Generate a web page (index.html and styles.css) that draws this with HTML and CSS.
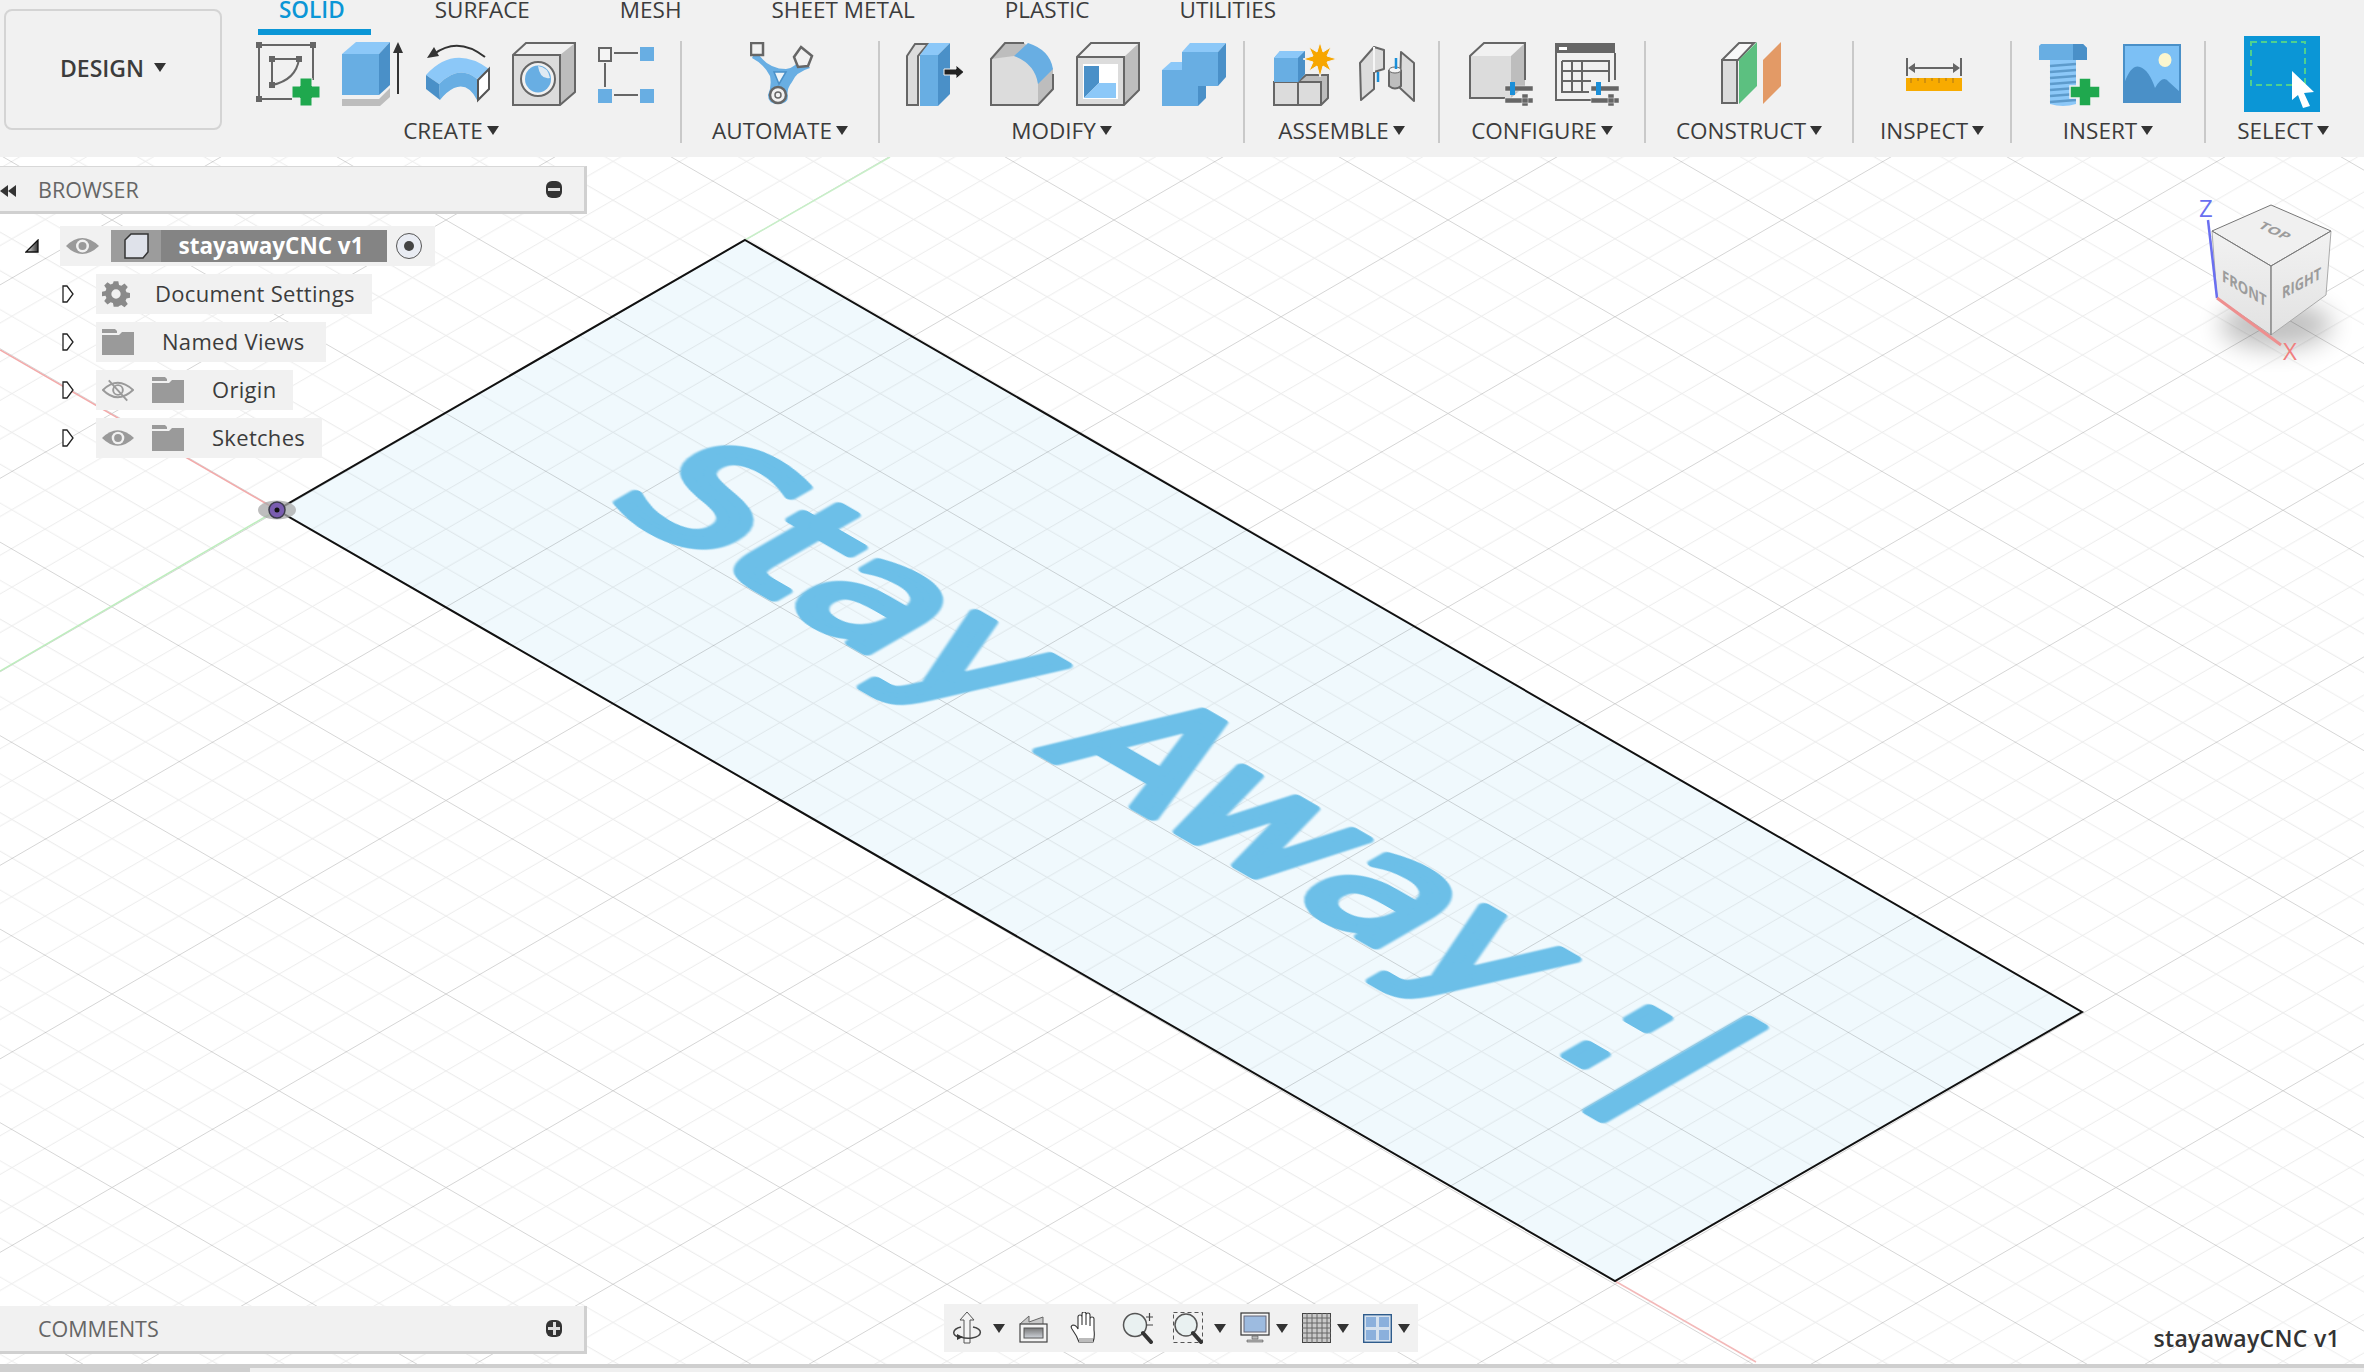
FILE: index.html
```html
<!DOCTYPE html>
<html lang="en">
  <head>
    <meta charset="UTF-8" />
    <meta name="viewport" content="width=device-width, initial-scale=1.0" />
    <title>stayawayCNC v1</title>
    <link rel="stylesheet" href="styles.css">
  </head>
  <body>
    <div class="app">
      <header class="toolbar">
        <div class="design-btn">DESIGN <i class="drop"></i></div>
        <div class="toolbar-main">
          <nav class="tabs">
            <span class="tab active">SOLID</span>
            <span class="tab">SURFACE</span>
            <span class="tab">MESH</span>
            <span class="tab">SHEET METAL</span>
            <span class="tab">PLASTIC</span>
            <span class="tab">UTILITIES</span>
          </nav>
          <div class="ribbon">
            <div class="group g-create">
              <div class="icons">
                <svg width="64" height="64" viewBox="0 0 64 64">
                  <path d="M3 3H57V38M3 3V57H36M16 17H43M16 17V43M43 17Q40 38 16 43" fill="none" stroke="#666" stroke-width="2"/>
                  <path d="M0 0h6v6H0zM54 0h6v6h-6zM0 54h6v6H0zM13 14h6v6h-6zM40 14h6v6h-6zM13 40h6v6h-6z" fill="#666"/>
                  <path d="M44 36h12v8h8v12h-8v8H44v-8h-8V44h8z" fill="#1fa84e" stroke="#f1f1f1" stroke-width="1"/>
                </svg>
                <svg width="62" height="64" viewBox="0 0 62 64">
                  <path d="M0 12L14 0H48L37 12z" fill="#8cc8f8"/>
                  <path d="M0 12H37V53H0z" fill="#68aee3"/>
                  <path d="M37 12L48 0V43L37 53z" fill="#4a90c8"/>
                  <path d="M0 57H37L48 46V55L38 64H0z" fill="#bdbdbd"/>
                  <path d="M56 52V8" stroke="#333" stroke-width="2"/>
                  <path d="M56 0l5 11H51z" fill="#333"/>
                </svg>
                <svg width="64" height="64" viewBox="0 0 64 64">
                  <path d="M0 33Q28 2 63 27L51 37Q33 22 13 42z" fill="#8cc8f8"/>
                  <path d="M13 42Q33 22 51 37V58Q42 40 28 46Q20 50 14 58z" fill="#68aee3"/>
                  <path d="M0 33L13 42L14 58L0 47z" fill="#4a90c8"/>
                  <path d="M52 38L63 27V47L52 58z" fill="#fff" stroke="#555" stroke-width="2"/>
                  <path d="M59 15Q32 -6 8 12" fill="none" stroke="#333" stroke-width="2"/>
                  <path d="M1 16L8 5L13 14z" fill="#333"/>
                </svg>
                <svg width="64" height="64" viewBox="0 0 64 64">
                  <path d="M1 13L14 1H63L48 13z" fill="#f1f1f1"/>
                  <path d="M48 13L63 1V50L48 63z" fill="#bdbdbd"/>
                  <path d="M1 13H48V63H1z" fill="#dcdcdc"/>
                  <path d="M1 63V13L14 1H63V50L48 63zM1 13H48V63" fill="none" stroke="#666" stroke-width="2"/>
                  <ellipse cx="26" cy="37" rx="17" ry="17" fill="#f1f1f1" stroke="#666" stroke-width="2"/>
                  <ellipse cx="26" cy="37" rx="13" ry="13.5" fill="#68aee3"/>
                  <path d="M26 24Q36 25 38 36Q28 38 26 24z" fill="#dfeaf3"/>
                </svg>
                <svg width="56" height="64" viewBox="0 0 56 64">
                  <path d="M1 6h12v13H1z" fill="#f4f4f4" stroke="#666" stroke-width="2"/>
                  <path d="M42 5h14v14H42zM0 47h14v14H0zM42 47h14v14H42z" fill="#68aee3"/>
                  <path d="M16 11H40M7 21V45M16 53H40" stroke="#666" stroke-width="2"/>
                </svg>
              </div>
              <div class="group-label">CREATE<i class="drop"></i></div>
            </div>
            <div class="group">
              <div class="icons">
                <svg width="64" height="64" viewBox="0 0 64 64">
                  <path d="M6 8Q16 27 36 27Q46 26 52 14L60 26Q46 30 42 40Q36 48 38 54Q38 62 28 62Q18 62 18 53Q22 44 20 34Q14 22 2 16z" fill="#68aee3"/>
                  <path d="M24 30H36L29 42z" fill="#eef4f8" stroke="#4a90c8" stroke-width="1.5"/>
                  <rect x="1" y="1" width="12" height="12" fill="#f1f1f1" stroke="#666" stroke-width="2.5"/>
                  <path d="M51 5L62 14L58 24L48 25L44 15z" fill="#f1f1f1" stroke="#666" stroke-width="2.5"/>
                  <circle cx="28" cy="53" r="8" fill="#f1f1f1" stroke="#666" stroke-width="2.5"/>
                  <circle cx="28" cy="53" r="3" fill="none" stroke="#666" stroke-width="1.5"/>
                </svg>
              </div>
              <div class="group-label">AUTOMATE<i class="drop"></i></div>
            </div>
            <div class="group g-modify">
              <div class="icons">
                <svg width="62" height="64" viewBox="0 0 62 64">
                  <path d="M1 63V14L9 2H22L12 14V63z" fill="#dcdcdc" stroke="#666" stroke-width="2"/>
                  <path d="M14 13L23 1H44L32 13z" fill="#8cc8f8"/>
                  <path d="M14 13H32V64H14z" fill="#68aee3"/>
                  <path d="M32 13L44 1V52L32 64z" fill="#4a90c8"/>
                  <path d="M38 27H50V23L58 30L50 37V33H38z" fill="#222" stroke="#f4f4f4" stroke-width="1"/>
                </svg>
                <svg width="64" height="64" viewBox="0 0 64 64">
                  <path d="M34 1H15L1 17V63H48L63 47V27z" fill="#bdbdbd"/>
                  <path d="M1 17L24 14Q48 20 48 42V63H1z" fill="#dcdcdc"/>
                  <path d="M24 14L38 1Q60 8 63 27L48 42Q45 22 24 14z" fill="#68aee3"/>
                  <path d="M34 1H15L1 17V63H48L63 47V32" fill="none" stroke="#666" stroke-width="2"/>
                </svg>
                <svg width="64" height="64" viewBox="0 0 64 64">
                  <path d="M1 15L15 1H63L48 15z" fill="#f1f1f1"/>
                  <path d="M48 15L63 1V48L48 63z" fill="#bdbdbd"/>
                  <path d="M1 15H48V63H1z" fill="#dcdcdc"/>
                  <path d="M1 63V15L15 1H63V48L48 63zM1 15H48V63" fill="none" stroke="#666" stroke-width="2"/>
                  <path d="M7 22H42V57H7z" fill="#fff"/>
                  <path d="M8 24H23V41L8 56z" fill="#4a90c8"/>
                  <path d="M8 56L23 41H40V56z" fill="#8cc8f8"/>
                </svg>
                <svg width="64" height="64" viewBox="0 0 64 64">
                  <path d="M20 10L28 1H64L56 10z" fill="#8cc8f8"/>
                  <path d="M56 10L64 1V35L56 44z" fill="#4a90c8"/>
                  <path d="M20 10H56V44H20z" fill="#68aee3"/>
                  <path d="M36 44H44V56L36 64z" fill="#4a90c8"/>
                  <path d="M0 28L9 20H20V28z" fill="#8cc8f8"/>
                  <path d="M0 28H20V44H36V64H0z" fill="#68aee3"/>
                </svg>
              </div>
              <div class="group-label">MODIFY<i class="drop"></i></div>
            </div>
            <div class="group">
              <div class="icons">
                <svg width="64" height="64" viewBox="0 0 64 64">
                  <path d="M25 40L33 33H55V56L48 63H25z" fill="#bdbdbd"/>
                  <path d="M25 40H48V63H25zM1 40H25V63H1z" fill="#dcdcdc"/>
                  <path d="M25 40L33 33H55V56L48 63H1V40H48V63M25 40V63" fill="none" stroke="#666" stroke-width="2"/>
                  <path d="M1 40V16L7 9H32V32L25 40z" fill="#68aee3"/>
                  <path d="M1 16L7 9H32L25 16z" fill="#8cc8f8"/>
                  <path d="M25 16L32 9V32L25 40z" fill="#4a90c8"/>
                  <path d="M47 0L50 10L58 5L54 14L64 17L54 20L58 29L50 24L47 35L44 24L36 29L40 20L30 17L40 14L36 5L44 10z" fill="#f7a600" stroke="#f1f1f1" stroke-width="1"/>
                </svg>
                <svg width="56" height="64" viewBox="0 0 56 64">
                  <path d="M1 21L15 5L25 8V27L15 30V47L2 58z" fill="#dcdcdc" stroke="#666" stroke-width="2" stroke-linejoin="round"/>
                  <path d="M15 5V30" stroke="#f6f6f6" stroke-width="2"/>
                  <path d="M42 10L55 21V59L41 46z" fill="#dcdcdc" stroke="#666" stroke-width="2" stroke-linejoin="round"/>
                  <path d="M30 29V44Q36 49 42 44V29z" fill="#bdbdbd" stroke="#666" stroke-width="2"/>
                  <ellipse cx="36" cy="28" rx="6" ry="3" fill="#f4f4f4" stroke="#666"/>
                  <path d="M19 30V40M37 16V27" stroke="#1b8fd8" stroke-width="2.5"/>
                </svg>
              </div>
              <div class="group-label">ASSEMBLE<i class="drop"></i></div>
            </div>
            <div class="group">
              <div class="icons">
                <svg width="64" height="64" viewBox="0 0 64 64">
                  <path d="M1 14L15 1H56L42 14z" fill="#f1f1f1"/>
                  <path d="M42 14L56 1V44L42 56z" fill="#bdbdbd"/>
                  <path d="M1 14H42V56H1z" fill="#dcdcdc"/>
                  <path d="M36 56H1V14L15 1H56V38" fill="none" stroke="#666" stroke-width="2"/>
                  <path d="M36 44h28v5H36zM36 56h28v5H36zM53 52h6v12h-6z" fill="#666" stroke="#f1f1f1" stroke-width=".5"/>
                  <path d="M41 40h5v13h-5z" fill="#1b8fd8"/>
                </svg>
                <svg width="64" height="64" viewBox="0 0 64 64">
                  <path d="M0 1H60V11H0z" fill="#666"/>
                  <path d="M4 5h8v3H4z" fill="#fff"/>
                  <path d="M1 11V58H38M60 11V38M7 19H54V40M7 19V50H34M7 29H54M7 39H36M17 19V50M27 19V50" fill="none" stroke="#666" stroke-width="2"/>
                  <path d="M36 44h28v5H36zM36 56h28v5H36zM53 52h6v12h-6z" fill="#666" stroke="#f1f1f1" stroke-width=".5"/>
                  <path d="M41 40h5v13h-5z" fill="#1b8fd8"/>
                </svg>
              </div>
              <div class="group-label">CONFIGURE<i class="drop"></i></div>
            </div>
            <div class="group">
              <div class="icons">
                <svg width="60" height="64" viewBox="0 0 60 64">
                  <path d="M1 18L18 1H33L17 18z" fill="#f8f8f8" stroke="#666" stroke-width="2"/>
                  <path d="M1 18H16V61H1z" fill="#dcdcdc" stroke="#666" stroke-width="2"/>
                  <path d="M18 18L36 0V44L18 62z" fill="#5cc080"/>
                  <path d="M42 18L60 0V44L42 62z" fill="#e39a66"/>
                </svg>
              </div>
              <div class="group-label">CONSTRUCT<i class="drop"></i></div>
            </div>
            <div class="group">
              <div class="icons">
                <svg width="56" height="33" viewBox="0 0 56 33">
                  <path d="M1 0V18M55 0V18M5 10H51" stroke="#666" stroke-width="2"/>
                  <path d="M2 10l7-5v10zM54 10l-7-5v10z" fill="#666"/>
                  <path d="M0 20H56V33H0z" fill="#f8ab00"/>
                  <path d="M5 20v5M12 20v3M19 20v5M26 20v3M33 20v5M40 20v3M47 20v5" stroke="#a9761a" stroke-width="1"/>
                </svg>
              </div>
              <div class="group-label">INSPECT<i class="drop"></i></div>
            </div>
            <div class="group">
              <div class="icons">
                <svg width="62" height="64" viewBox="0 0 62 64">
                  <path d="M11 18H37V62Q24 66 11 62z" fill="#8cc8f8"/>
                  <path d="M11 24L37 22M11 30L37 28M11 36L37 34M11 42L37 40M11 48L37 46M11 54L37 52M11 60L37 58" stroke="#5d9bcc" stroke-width="2.5"/>
                  <path d="M2 2H44L48 6V18H0V4z" fill="#68aee3"/>
                  <path d="M34 2H44L48 6V18H34z" fill="#4a90c8"/>
                  <path d="M40 36h12v8h9v12h-9v8H40v-8h-9V44h9z" fill="#1fa84e" stroke="#f1f1f1" stroke-width="1.5"/>
                </svg>
                <svg width="58" height="64" viewBox="0 0 58 64">
                  <path d="M1 3H57V60H1z" fill="#7cc0f5" stroke="#4a90c8" stroke-width="2"/>
                  <path d="M1 42Q8 22 17 25Q26 28 32 46Q40 32 46 40L57 50V60H1z" fill="#4a90c8"/>
                  <ellipse cx="42" cy="18" rx="6.5" ry="7" fill="#fbf6cf"/>
                </svg>
              </div>
              <div class="group-label">INSERT<i class="drop"></i></div>
            </div>
            <div class="group last">
              <div class="icons">
                <svg width="76" height="76" viewBox="0 0 76 76">
                  <path d="M0 0H76V76H0z" fill="#0b96d6"/>
                  <path d="M7 6H61V49H7z" fill="none" stroke="#4fd08f" stroke-width="2" stroke-dasharray="6 4"/>
                  <path d="M48 35L70 56L60 57L66 70L59 72L54 59L48 64z" fill="#fff"/>
                </svg>
              </div>
              <div class="group-label">SELECT<i class="drop"></i></div>
            </div>
          </div>
        </div>
      </header>

      <main class="viewport">
        <svg class="scene" width="2364" height="1207" viewBox="0 157 2364 1207">
          <defs>
            <pattern id="grid" patternUnits="userSpaceOnUse" width="100" height="100" patternTransform="matrix(1.67 0.9675 -1.67 0.9675 780 413)">
              <path d="M0 20H100M0 40H100M0 60H100M0 80H100M20 0V100M40 0V100M60 0V100M80 0V100" stroke="#000" stroke-opacity=".07" stroke-width=".55" fill="none"/>
              <path d="M0 0H100M0 0V100" stroke="#000" stroke-opacity=".21" stroke-width=".8" fill="none"/>
            </pattern>
            <linearGradient id="faceLeft" x1="0" y1="0" x2="0" y2="1">
              <stop offset="0" stop-color="#f2f2f2"/>
              <stop offset="1" stop-color="#e2e2e2"/>
            </linearGradient>
            <filter id="soft" x="-50%" y="-80%" width="200%" height="260%"><feGaussianBlur stdDeviation="12"/></filter>
            <filter id="fuzz"><feGaussianBlur stdDeviation="0.8"/></filter>
          </defs>
          <rect x="0" y="157" width="2364" height="1207" fill="#fff"/>
          <path d="M745 240L2082 1012L1615 1281L277 510z" fill="#f0f9fd"/>
          <rect x="0" y="157" width="2364" height="1207" fill="url(#grid)"/>
          <path d="M0 350L277 510" stroke="#f3a9a9" stroke-width="1.5"/>
          <path d="M1615 1281L1756 1362" stroke="#f3b9b9" stroke-width="1.5"/>
          <path d="M277 510L0 671" stroke="#bdeebd" stroke-width="1.5"/>
          <path d="M745 240L890 157" stroke="#c8efc8" stroke-width="1.5"/>
          <text class="plate-text" filter="url(#fuzz)" transform="matrix(.866 .5 -.81 .468 603 499)">Stay Away :|</text>
          <path d="M745 240L2082 1012L1615 1281L277 510z" fill="none" stroke="#111" stroke-width="2"/>
          <ellipse cx="277" cy="510" rx="19" ry="9.5" fill="#a8a8a8" opacity=".75"/>
          <circle cx="277" cy="510" r="8" fill="#7a5db0" stroke="#3b3b4a" stroke-width="1.5"/>
          <circle cx="277" cy="510" r="2.5" fill="#111"/>

          <ellipse cx="2276" cy="325" rx="56" ry="24" fill="#000" opacity=".24" filter="url(#soft)"/>
          <path d="M2212 231L2271 205L2331 231L2271 266z" fill="#f0f0f0" stroke="#777"/>
          <path d="M2212 231L2271 266V335L2217 298z" fill="url(#faceLeft)" stroke="#aaa"/>
          <path d="M2271 266L2331 231L2326 295L2271 335z" fill="url(#faceLeft)" stroke="#aaa"/>
          <path d="M2212 231L2271 266L2331 231M2271 266V335" fill="none" stroke="#777"/>
          <text class="cube-text" transform="matrix(.9 .42 -.6 .5 2257 227)">TOP</text>
          <text class="cube-text" transform="matrix(.82 .48 0 1 2222 281)">FRONT</text>
          <text class="cube-text" transform="matrix(.8 -.42 0 1 2282 299)">RIGHT</text>
          <path d="M2217 298L2208 220" stroke="#6a6ff0" stroke-width="2.5"/>
          <path d="M2217 298L2281 345" stroke="#ee8f8f" stroke-width="3"/>
          <text class="axis-z" x="2199" y="217">Z</text>
          <text class="axis-x" x="2283" y="360">X</text>
        </svg>

        <section class="panel browser">
          <i class="rewind"><b></b><b></b></i>
          <span class="panel-title">BROWSER</span>
          <i class="panel-btn minus"></i>
        </section>

        <ul class="tree">
          <li class="tree-row root">
            <svg class="twist" width="14" height="14" viewBox="0 0 14 14"><defs><linearGradient id="tw"><stop offset="0" stop-color="#eee"/><stop offset="1" stop-color="#333"/></linearGradient></defs><path d="M13 1V13H1z" fill="url(#tw)" stroke="#111" stroke-width="1.3"/></svg>
            <div class="row-body">
              <svg class="eye" width="33" height="22" viewBox="0 0 33 22"><use href="#eyeIcon"/></svg>
              <span class="root-name">
                <span class="root-cube"><svg width="26" height="26" viewBox="0 0 26 26"><path d="M2 7L8 1H25V19L20 25H2z" fill="#dfe2ea" stroke="#333" stroke-width="1.5"/></svg></span>
                <span class="root-text">stayawayCNC v1</span>
              </span>
              <span class="radio"><i></i></span>
            </div>
          </li>
          <li class="tree-row">
            <svg class="twist" width="12" height="18" viewBox="0 0 12 18"><path d="M1 1H5L11 9L5 17H1z" fill="#fff" stroke="#222" stroke-width="1.3"/></svg>
            <div class="row-body">
              <svg width="28" height="28" viewBox="0 0 24 24"><path fill="#8a8a8a" d="M10 1h4l.6 3.2 2 .8 2.7-1.9 2.8 2.8-1.900 2.700.8 2 3 .6v4l-3 .6-.8 2 1.900 2.700-2.800 2.800-2.700-1.900-2 .8L14 23h-4l-.6-3.200-2-.8-2.700 1.900-2.800-2.800 1.900-2.700-.8-2L0 14v-4l3-.6.8-2L1.900 4.700 4.700 1.900 7.400 3.800l2-.8zM12 8a4 4 0 1 0 0 8 4 4 0 0 0 0-8z"/></svg>
              <span class="row-text t-doc">Document Settings</span>
            </div>
          </li>
          <li class="tree-row">
            <svg class="twist" width="12" height="18" viewBox="0 0 12 18"><path d="M1 1H5L11 9L5 17H1z" fill="#fff" stroke="#222" stroke-width="1.3"/></svg>
            <div class="row-body">
              <svg class="folder" width="32" height="26" viewBox="0 0 32 26"><use href="#folderIcon"/></svg>
              <span class="row-text t-views">Named Views</span>
            </div>
          </li>
          <li class="tree-row">
            <svg class="twist" width="12" height="18" viewBox="0 0 12 18"><path d="M1 1H5L11 9L5 17H1z" fill="#fff" stroke="#222" stroke-width="1.3"/></svg>
            <div class="row-body">
              <svg class="eye" width="32" height="24" viewBox="0 0 33 24"><path d="M1 12Q16 -3 32 12Q16 27 1 12z" fill="none" stroke="#9a9a9a" stroke-width="2"/><circle cx="16.500" cy="12" r="5" fill="none" stroke="#9a9a9a" stroke-width="2"/><path d="M7 2L26 23" stroke="#9a9a9a" stroke-width="2"/></svg>
              <svg class="folder" width="32" height="26" viewBox="0 0 32 26"><use href="#folderIcon"/></svg>
              <span class="row-text t-sub">Origin</span>
            </div>
          </li>
          <li class="tree-row">
            <svg class="twist" width="12" height="18" viewBox="0 0 12 18"><path d="M1 1H5L11 9L5 17H1z" fill="#fff" stroke="#222" stroke-width="1.3"/></svg>
            <div class="row-body">
              <svg class="eye" width="32" height="22" viewBox="0 0 33 22"><use href="#eyeIcon"/></svg>
              <svg class="folder" width="32" height="26" viewBox="0 0 32 26"><use href="#folderIcon"/></svg>
              <span class="row-text t-sub">Sketches</span>
            </div>
          </li>
        </ul>

        <section class="panel comments">
          <span class="panel-title">COMMENTS</span>
          <i class="panel-btn plus"></i>
        </section>

        <div class="navbar">
          <div class="nav-item loose">
            <svg width="30" height="34" viewBox="0 0 30 34"><path d="M15 1L22 9H18V32H12V9H8z" fill="#f4f4f4" stroke="#555"/><path d="M9 16C0 18 -1 25 8 26M21 16C31 18 31 25 20 27Q14 28 9 26" fill="none" stroke="#444" stroke-width="1.500"/><path d="M5 23l6 3-6 3z" fill="#333"/></svg>
            <i class="drop"></i>
          </div>
          <svg width="29" height="30" viewBox="0 0 29 30"><path d="M1 11L10 3V9L24 4V11" fill="#c9c9c9" stroke="#666"/><rect x="1" y="11" width="27" height="18" fill="#f4f4f4" stroke="#444" stroke-width="1.200"/><defs><linearGradient id="lk" x1="0" y1="0" x2="0" y2="1"><stop offset="0" stop-color="#777"/><stop offset="1" stop-color="#cfd3da"/></linearGradient></defs><rect x="5" y="15" width="19" height="10" fill="url(#lk)" stroke="#555"/></svg>
          <svg class="spaced" width="30" height="32" viewBox="0 0 30 32"><path d="M9 30Q7 24 2 17Q0 14 3 13Q6 13 8 17V5Q8 3 10 3T12 5V13V2Q12 0 14 0T16 2V13V3Q16 1 18 1T20 3V14V7Q20 5 22 5T24 7V18Q25 25 23 30z" fill="#fff" stroke="#333" stroke-width="1.100"/><path d="M9 26H23V30H9z" fill="#bbb"/></svg>
          <svg class="spaced" width="31" height="32" viewBox="0 0 31 32"><circle cx="13" cy="13" r="11.500" fill="#e9f1f1" stroke="#555" stroke-width="1.500"/><path d="M21 21L29 30" stroke="#333" stroke-width="4" stroke-linecap="round"/><path d="M24 5H31M27.500 1V9M24 13H31" stroke="#444" stroke-width="1.200"/></svg>
          <div class="nav-item loose spaced-sm">
            <svg width="30" height="32" viewBox="0 0 30 32"><rect x=".5" y=".5" width="29" height="30" fill="none" stroke="#555" stroke-dasharray="4 3"/><circle cx="13" cy="13" r="11" fill="#e9f1f1" stroke="#555" stroke-width="1.500"/><path d="M20 21L28 30" stroke="#333" stroke-width="4" stroke-linecap="round"/></svg>
            <i class="drop"></i>
          </div>
          <div class="nav-item">
            <svg width="30" height="32" viewBox="0 0 30 32"><rect x="1" y="1" width="28" height="22" fill="#f4f4f4" stroke="#333" stroke-width="1.200"/><rect x="4" y="4" width="22" height="16" fill="#9dbbe0" stroke="#667"/><path d="M12 24H18V27H12zM7 28H23V30H7z" fill="#bbb" stroke="#555" stroke-width=".6"/></svg>
            <i class="drop"></i>
          </div>
          <div class="nav-item">
            <svg width="29" height="30" viewBox="0 0 29 30"><rect x=".5" y=".5" width="28" height="29" fill="#c9c9c9" stroke="#444"/><path d="M5 0V30M10 0V30M15 0V30M20 0V30M25 0V30M0 5H29M0 10H29M0 15H29M0 20H29M0 25H29" stroke="#666" stroke-width="1"/></svg>
            <i class="drop"></i>
          </div>
          <div class="nav-item">
            <svg width="29" height="29" viewBox="0 0 29 29"><rect x=".7" y=".7" width="27.600" height="27.600" fill="#d5e1ee" stroke="#2f5c8c" stroke-width="1.400"/><path d="M3 3H13V13H3zM16 3H26V13H16zM3 16H13V26H3zM16 16H26V26H16z" fill="#8bb0dc"/></svg>
            <i class="drop"></i>
          </div>
        </div>

        <div class="doc-name">stayawayCNC v1</div>
      </main>

      <footer class="statusbar"><span class="status-left"></span></footer>
    </div>

    <svg class="sprites" width="0" height="0">
      <symbol id="eyeIcon" viewBox="0 0 33 22"><path d="M0 11Q16 -5 33 11Q16 27 0 11z" fill="#9a9a9a"/><circle cx="16.500" cy="11" r="6.500" fill="#f1f1f1"/><circle cx="16.500" cy="11" r="4" fill="#9a9a9a"/></symbol>
      <symbol id="folderIcon" viewBox="0 0 32 26"><path d="M0 0H13L15 2V4H0zM0 6H17L20 3H32V26H0z" fill="#9a9a9a"/></symbol>
    </svg>
  </body>
</html>
```

FILE: styles.css
```css
* {
  box-sizing: border-box;
}

body {
  margin: 0;
  font-family: "Open Sans", Arial, sans-serif;
  color: #3c3c3c;
  background: #fff;
  overflow: hidden;
}

.app {
  display: flex;
  flex-direction: column;
  width: 2364px;
  height: 1372px;
}

.sprites {
  position: absolute;
}

/* top toolbar */
.toolbar {
  display: flex;
  flex: none;
  height: 157px;
  background: #f1f1f1;
}

.design-btn {
  display: flex;
  align-items: center;
  justify-content: center;
  gap: 10px;
  flex: none;
  width: 218px;
  height: 121px;
  margin: 9px 12px 0 4px;
  padding-bottom: 4px;
  border: 2px solid #d4d4d4;
  border-radius: 8px;
  font-size: 23px;
  font-weight: 600;
}

.drop {
  display: inline-block;
  width: 0;
  height: 0;
  border-left: 6px solid transparent;
  border-right: 6px solid transparent;
  border-top: 9px solid #333;
}

.toolbar-main {
  flex: 1;
  min-width: 0;
}

.tabs {
  display: flex;
  height: 36px;
}

.tab {
  position: relative;
  padding: 0 45px;
  font-size: 22.5px;
  line-height: 20px;
}

.tab.active {
  color: #0b96d6;
  font-weight: 600;
}

.tab.active::after {
  content: "";
  position: absolute;
  left: 24px;
  right: 19px;
  top: 29px;
  height: 6px;
  background: #0b96d6;
}

.ribbon {
  display: grid;
  grid-template-columns: 448px 198px 365px 195px 206px 208px 158px 194px 158px;
  margin-top: 5px;
}

.group {
  height: 102px;
  padding: 1px 0 0 4px;
  border-right: 2px solid #c9c9c9;
}

.g-modify .icons {
  padding-left: 4px;
}

.group.last {
  padding-left: 0;
  border-right: 0;
}

.last .icons {
  padding-right: 6px;
}

.icons {
  display: flex;
  align-items: center;
  justify-content: center;
  gap: 22px;
  height: 64px;
}

.g-create .icons {
  padding-right: 8px;
}

.g-create .group-label {
  padding-right: 12px;
}

.group-label {
  display: flex;
  align-items: center;
  justify-content: center;
  gap: 4px;
  height: 24px;
  margin: 12px 0 0 -4px;
  font-size: 22.5px;
}

/* 3d view */
.viewport {
  position: relative;
  flex: 1;
  overflow: hidden;
}

.scene {
  position: absolute;
  left: 0;
  top: 0;
}

.plate-text {
  font-family: "DejaVu Sans", sans-serif;
  font-size: 197px;
  fill: #6cbfe8;
  stroke: #6cbfe8;
  stroke-width: 11px;
  stroke-linejoin: round;
}

.cube-text {
  font-family: "Open Sans", Arial, sans-serif;
  font-size: 16px;
  font-weight: 700;
  fill: #9c9c9c;
}

.axis-z,
.axis-x {
  font-family: "Open Sans", Arial, sans-serif;
  font-size: 24px;
}

.axis-z {
  fill: #6a6ff0;
}

.axis-x {
  fill: #f07f7f;
}

.panel {
  position: absolute;
  left: 0;
  display: flex;
  align-items: center;
  width: 587px;
  height: 48px;
  padding-left: 38px;
  background: #f1f1f1;
  border-right: 3px solid #d0d0d0;
  border-bottom: 3px solid #d0d0d0;
}

.browser {
  top: 9px;
  border-top: 1px solid #d8d8d8;
}

.comments {
  top: 1149px;
}

.panel-title {
  flex: 1;
  font-size: 21.5px;
  color: #666;
}

.rewind {
  position: absolute;
  left: 0;
  top: 18px;
  display: flex;
}

.rewind b {
  width: 0;
  height: 0;
  border-top: 6px solid transparent;
  border-bottom: 6px solid transparent;
  border-right: 8px solid #333;
}

.panel-btn {
  position: relative;
  width: 16px;
  height: 17px;
  margin-right: 22px;
  background: #333;
  border-radius: 6px;
}

.panel-btn::before {
  content: "";
  position: absolute;
  left: 2px;
  right: 2px;
  top: 7px;
  height: 3px;
  background: #ddd;
}

.plus::after {
  content: "";
  position: absolute;
  left: 6.500px;
  top: 2px;
  width: 3px;
  height: 13px;
  background: #ddd;
}

.tree {
  position: absolute;
  left: 0;
  top: 69px;
  margin: 0;
  padding: 0;
  list-style: none;
}

.tree-row {
  display: flex;
  align-items: center;
  height: 40px;
  margin-bottom: 8px;
  padding-left: 62px;
}

.tree-row .twist {
  margin-right: 22px;
}

.tree-row.root {
  padding-left: 25px;
}

.tree-row.root .twist {
  margin-right: 21px;
}

.row-body {
  display: flex;
  align-items: center;
  height: 40px;
  padding: 0 6px;
  background: #f1f1f1;
}

.row-text {
  padding-bottom: 2px;
  font-size: 22px;
  letter-spacing: .3px;
}

.t-doc {
  margin-left: 25px;
  padding-right: 11px;
}

.t-views {
  margin-left: 28px;
  padding-right: 15px;
}

.t-sub {
  margin-left: 28px;
  padding-right: 11px;
}

.eye + .folder {
  margin-left: 18px;
}

.root .eye {
  margin-right: 12px;
}

.root-name {
  display: flex;
  height: 32px;
  background: #848484;
}

.root-cube {
  display: flex;
  align-items: center;
  justify-content: center;
  width: 50px;
  background: #9c9c9c;
}

.root-text {
  width: 226px;
  padding-right: 6px;
  color: #fff;
  font-size: 22.5px;
  font-weight: 700;
  line-height: 32px;
  text-align: center;
  white-space: nowrap;
}

.radio {
  display: flex;
  align-items: center;
  justify-content: center;
  width: 26px;
  height: 26px;
  margin: 0 7px 0 9px;
  background: #e9ecf3;
  border: 1.500px solid #555;
  border-radius: 50%;
}

.radio i {
  width: 10px;
  height: 10px;
  background: #444;
  border-radius: 50%;
}

.navbar {
  position: absolute;
  left: 944px;
  top: 1147px;
  display: flex;
  align-items: center;
  gap: 14px;
  height: 48px;
  padding: 0 8px;
  background: #f1f1f1;
}

.nav-item {
  display: flex;
  align-items: center;
  gap: 6px;
}

.nav-item.loose {
  gap: 11px;
}

.spaced {
  margin-left: 8px;
}

.spaced-sm {
  margin-left: 6px;
}

.doc-name {
  position: absolute;
  right: 24px;
  top: 1165px;
  font-size: 23px;
  font-weight: 600;
  letter-spacing: .3px;
  color: #333;
}

.statusbar {
  flex: none;
  height: 8px;
  background: #efefef;
  border-top: 4px solid #cfcfcf;
}

.status-left {
  display: block;
  width: 250px;
  height: 4px;
  background: #cfcfcf;
}
```
